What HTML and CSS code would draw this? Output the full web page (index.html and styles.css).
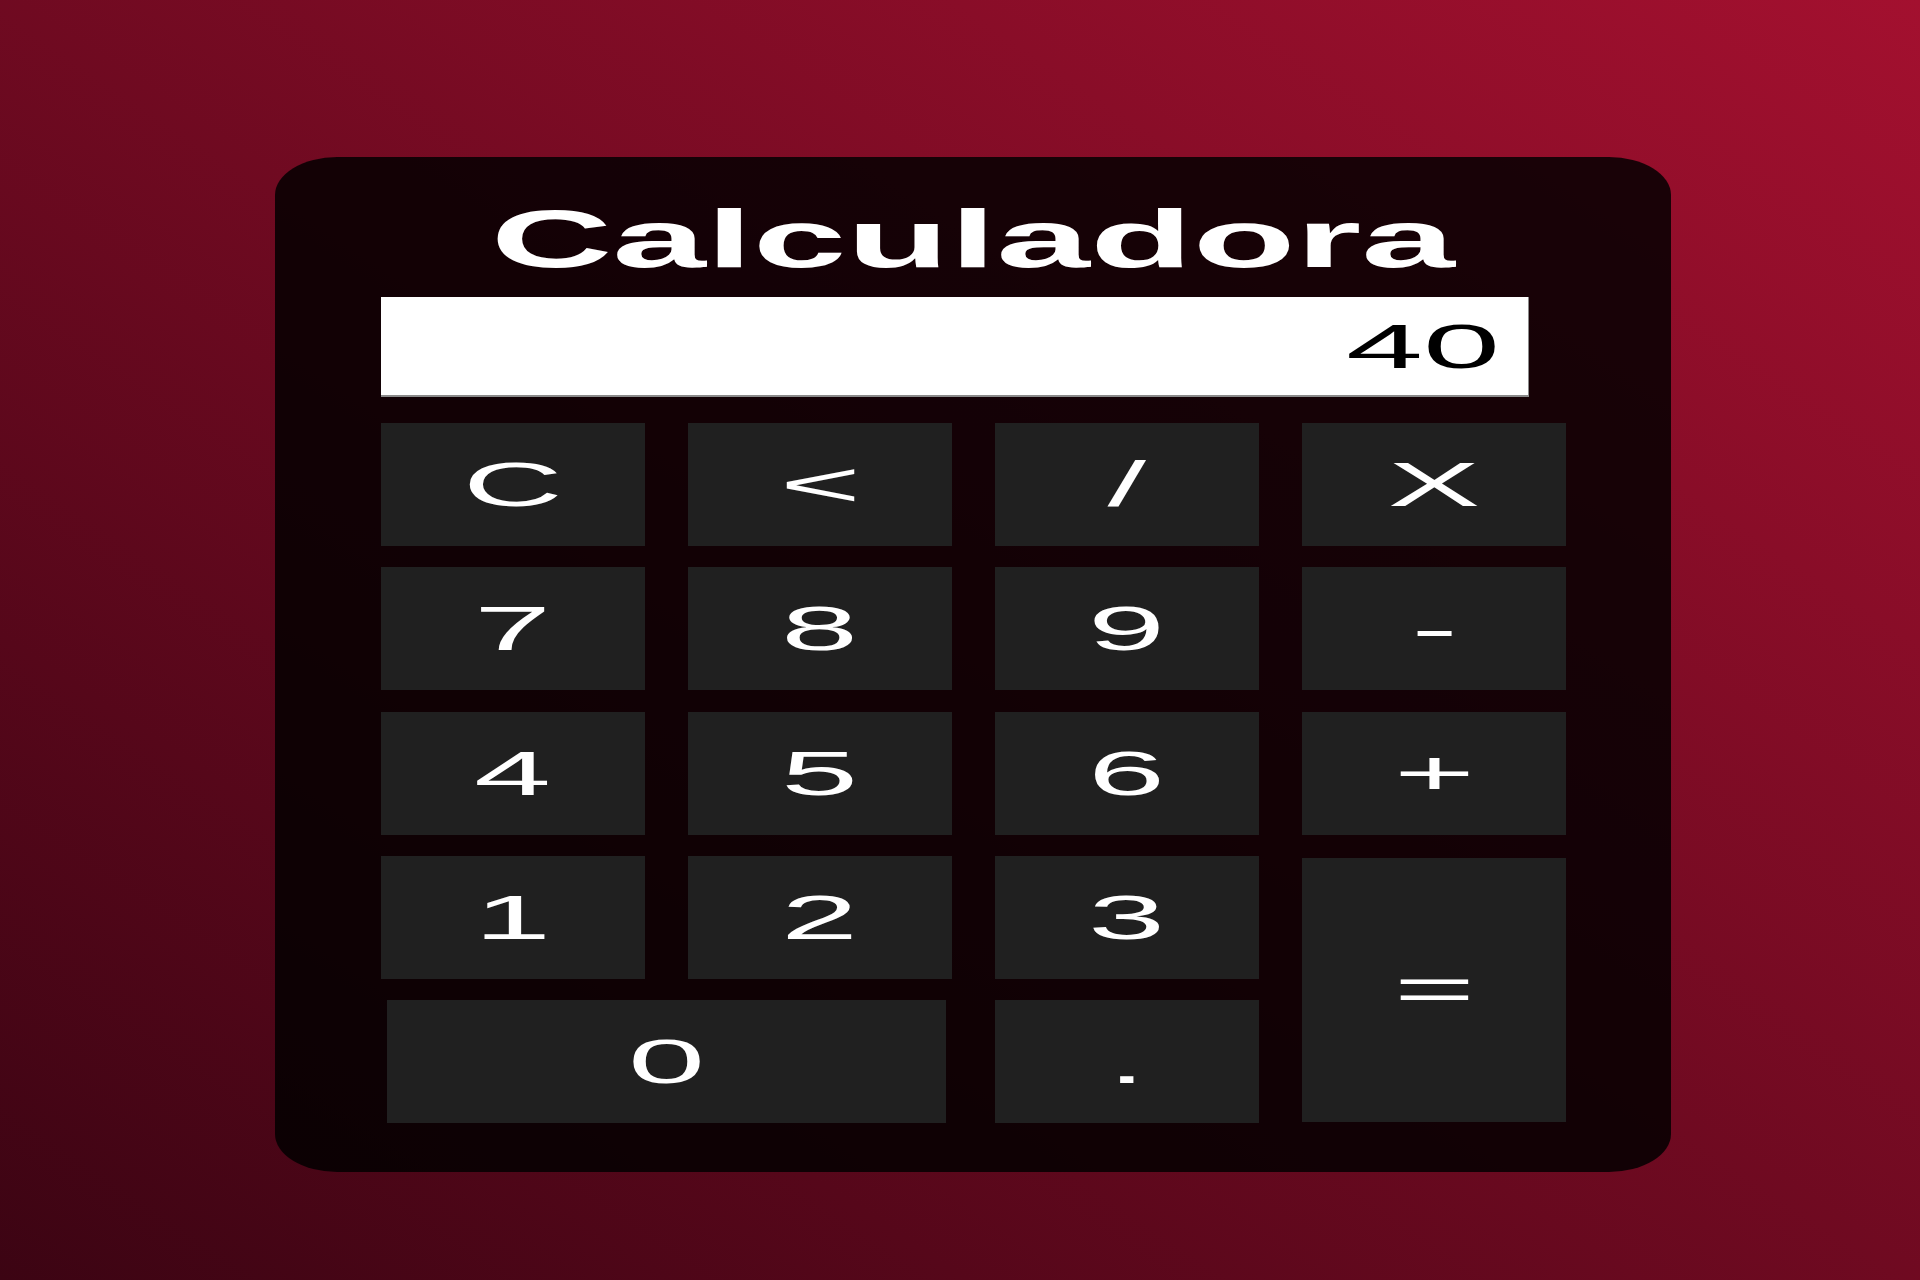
FILE: index.html
```html
<!DOCTYPE html>
<html lang="es">
<head>
<meta charset="utf-8">
<title>Calculadora</title>
<link rel="stylesheet" href="styles.css">
</head>
<body>
<main class="page">
  <section class="calc">
    <h1 class="calc-title"><span class="stretch-title">Calculadora</span></h1>
    <div class="display"><span class="stretch stretch-right">40</span></div>
    <div class="keys">
      <button class="key"><span class="stretch">C</span></button>
      <button class="key"><span class="stretch">&lt;</span></button>
      <button class="key"><span class="stretch">/</span></button>
      <button class="key"><span class="stretch">X</span></button>
      <button class="key"><span class="stretch">7</span></button>
      <button class="key"><span class="stretch">8</span></button>
      <button class="key"><span class="stretch">9</span></button>
      <button class="key"><span class="stretch">-</span></button>
      <button class="key"><span class="stretch">4</span></button>
      <button class="key"><span class="stretch">5</span></button>
      <button class="key"><span class="stretch">6</span></button>
      <button class="key"><span class="stretch">+</span></button>
      <button class="key"><span class="stretch">1</span></button>
      <button class="key"><span class="stretch">2</span></button>
      <button class="key"><span class="stretch">3</span></button>
      <button class="key key-equals"><span class="stretch">=</span></button>
      <button class="key key-zero"><span class="stretch">0</span></button>
      <button class="key"><span class="stretch">.</span></button>
    </div>
  </section>
</main>
</body>
</html>
```

FILE: styles.css
```css
html, body {
  margin: 0;
  padding: 0;
}

body {
  width: 1920px;
  height: 1280px;
  overflow: hidden;
  background: linear-gradient(to top right, #3c0413 0%, #a3102f 100%);
  font-family: "Liberation Sans", Arial, sans-serif;
}

.page {
  box-sizing: border-box;
  height: 1280px;
  padding: 157px 0 0 275px;
}

.calc {
  box-sizing: border-box;
  width: 1396px;
  height: 1015px;
  padding: 37px 106px 49px 106px;
  background: rgba(0, 0, 0, 0.83);
  border-radius: 62px / 38px;
}

.calc-title {
  margin: 0;
  height: 90px;
  line-height: 90px;
  font-size: 81px;
  font-weight: bold;
  color: #ffffff;
  text-align: center;
}

.stretch-title {
  display: inline-block;
  transform: scaleX(2.08);
  transform-origin: center center;
}

.display {
  box-sizing: border-box;
  width: 1148px;
  height: 100px;
  margin-top: 13px;
  padding-right: 28px;
  background: #ffffff;
  border-right: 1px solid #8a8a8a;
  border-bottom: 2px solid #8a8a8a;
  display: flex;
  align-items: center;
  justify-content: flex-end;
  font-size: 63px;
  color: #000000;
}

.stretch {
  display: inline-block;
  transform: scaleX(2.2);
  transform-origin: center center;
}

.stretch-right {
  transform-origin: right center;
}

.keys {
  margin-top: 26px;
  display: grid;
  grid-template-columns: repeat(4, 264px);
  grid-template-rows: repeat(5, 123px);
  column-gap: 43px;
  row-gap: 21.25px;
}

.key {
  margin: 0;
  padding: 0;
  border: none;
  border-radius: 0;
  background: #202020;
  color: #ffffff;
  font-family: "Liberation Sans", Arial, sans-serif;
  font-size: 63px;
  line-height: 1;
  display: flex;
  align-items: center;
  justify-content: center;
}

.key-equals {
  grid-column: 4;
  grid-row: 4 / span 2;
  margin: 2px 0 1px 0;
}

.key-zero {
  grid-column: 1 / span 2;
  margin: 0 6px 0 6px;
}
```
